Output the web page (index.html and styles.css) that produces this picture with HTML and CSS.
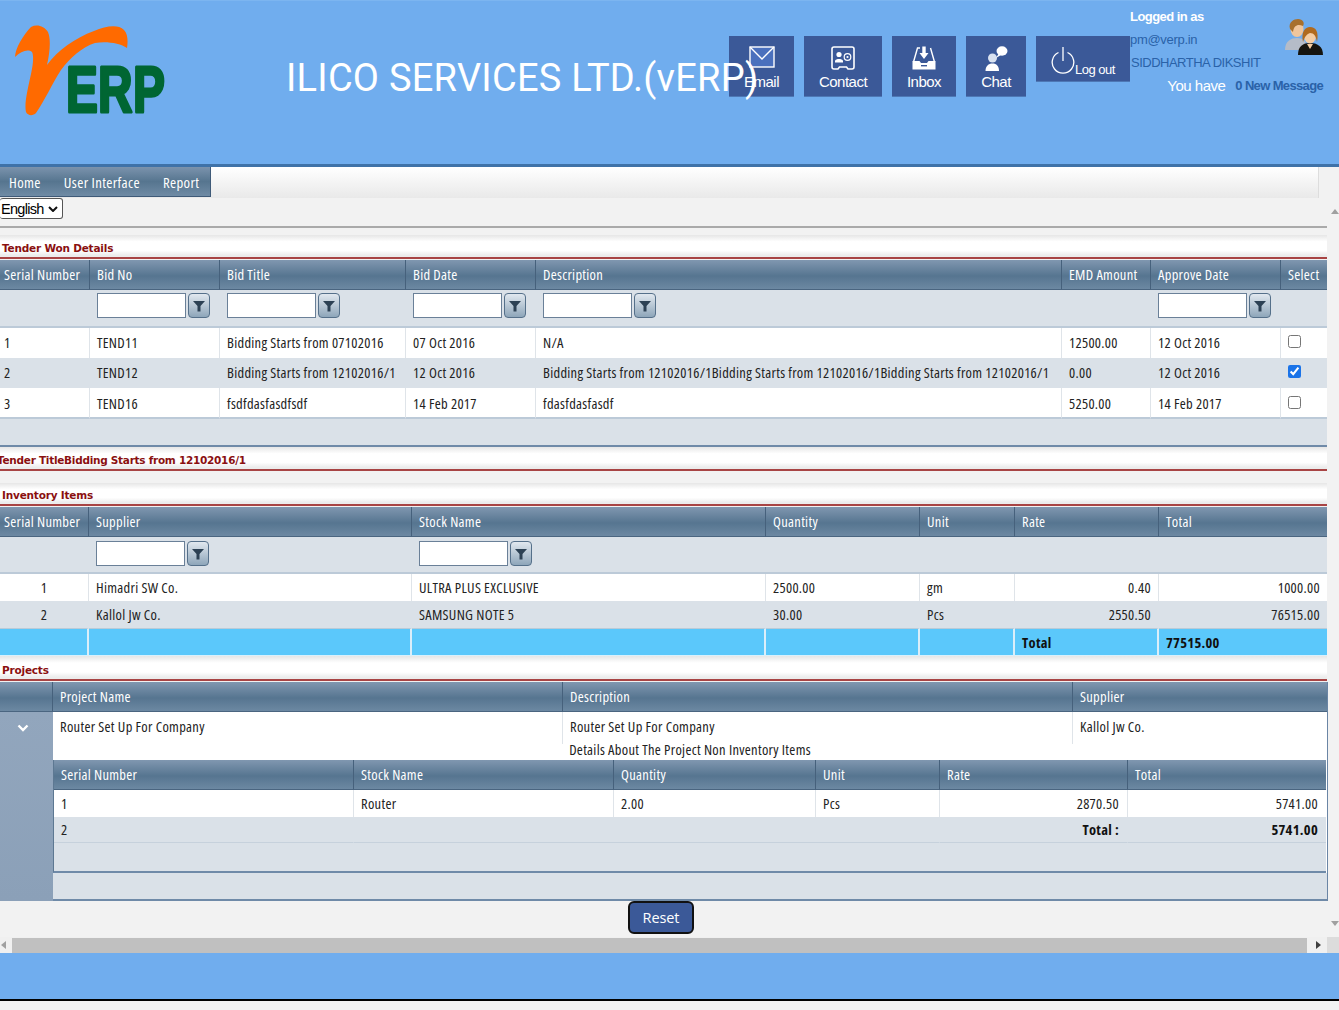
FILE: index.html
```html
<!DOCTYPE html>
<html lang="en">
<head>
<meta charset="utf-8">
<title>Tender Won Details</title>
<link rel="stylesheet" href="styles.css">
</head>
<body>
<header class="top">
  <div class="logo">
    <svg width="152" height="92" viewBox="15 25 152 92">
      <path fill="#ff6a00" d="M15 57C15 49 23 35 31 27C37 24 44 26 48 32C51 39 50 52 47 65C58 50 75 38 94 31C106 26 118 24 124 30C128 34 128 42 127 48C120 43 106 41 95 43C82 47 70 58 61 70C52 84 45 100 36 113C33 116 28 116 26 112C24 104 28 88 31 74C33 65 34 56 32 52C28 49 21 51 15 57Z"/>
      <text class="logo-erp" x="66" y="112" textLength="99" lengthAdjust="spacingAndGlyphs">ERP</text>
    </svg>
  </div>
  <h1 class="brand">ILICO SERVICES LTD.(vERP)</h1>
  <nav class="tiles">
    <a class="tile tile-email">
      <svg width="26" height="22" viewBox="0 0 26 22"><rect x="1" y="1" width="24" height="20" fill="#4a70bd" stroke="#fff" stroke-width="1.4"/><path d="M1 1L13 13L25 1" fill="none" stroke="#fff" stroke-width="1.4"/></svg>
      <span>Email</span>
    </a>
    <a class="tile tile-contact">
      <svg width="24" height="24" viewBox="0 0 24 24"><path d="M3 1H21A2 2 0 0 1 23 3V21A2 2 0 0 1 21 23H17L15.500 21H8.500L7 23H3A2 2 0 0 1 1 21V3A2 2 0 0 1 3 1Z" fill="none" stroke="#fff" stroke-width="1.6"/><circle cx="8" cy="8.500" r="2.600" fill="#fff"/><path d="M4 16.500H12V15C12 13.500 9.500 13 8 13C6.500 13 4 13.500 4 15Z" fill="#fff"/><circle cx="16.500" cy="11" r="3.300" fill="none" stroke="#fff" stroke-width="1.200"/><circle cx="16.500" cy="11" r="1.100" fill="#fff"/></svg>
      <span>Contact</span>
    </a>
    <a class="tile tile-inbox">
      <svg width="24" height="24" viewBox="0 0 24 24"><path d="M1.500 16L5.500 2H8M18.500 2L22.500 16" fill="none" stroke="#fff" stroke-width="1.400"/><path d="M10.300 0.500H13.700V7H16.500L12 13L7.500 7H10.300Z" fill="#fff"/><path d="M0.500 15H7.500L9 17H15L16.500 15H23.500V23.500H0.500Z" fill="#fff"/><rect x="9" y="19" width="6" height="1.400" fill="#3b5998"/></svg>
      <span>Inbox</span>
    </a>
    <a class="tile tile-chat">
      <svg width="24" height="25" viewBox="0 0 24 25"><circle cx="8.500" cy="12" r="4.500" fill="#d9e2f0"/><path d="M1.500 25C1.500 20 4.500 17.500 8.500 17.500C12.500 17.500 15 20 15 25Z" fill="#fff"/><ellipse cx="18" cy="5" rx="5.500" ry="4.700" fill="#fff"/><path d="M14.500 8L12 12L17 9Z" fill="#fff"/></svg>
      <span>Chat</span>
    </a>
    <a class="tile tile-logout">
      <svg width="24" height="28" viewBox="0 0 24 28"><path d="M7.500 6.500A10.800 10.800 0 1 0 16.500 6.500" fill="none" stroke="#fff" stroke-width="1.300"/><path d="M12 1V15" stroke="#fff" stroke-width="1.300"/></svg>
      <span>Log out</span>
    </a>
  </nav>
  <aside class="user">
    <div class="user-top">
      <div class="user-lines">
        <div class="u-logged">Logged in as</div>
        <div class="u-mail">pm@verp.in</div>
        <div class="u-name">SIDDHARTHA DIKSHIT</div>
      </div>
      <svg class="avatar" width="38" height="36" viewBox="0 0 38 36">
        <path d="M0 31C0 22 6 19 12 19C18 19 22 22 22 31Z" fill="#b5bcc8"/>
        <ellipse cx="12" cy="10" rx="6.500" ry="8" fill="#f0c69c"/>
        <path d="M5 10C3 3 9 0 13 0C18 0 20 4 18 7C13 5 9 6 8 13Z" fill="#a8702c"/>
        <path d="M13 36C13 27 18 24 25 24C32 24 38 27 38 36Z" fill="#15140f"/>
        <ellipse cx="25" cy="17" rx="6" ry="7.500" fill="#f4cda3"/>
        <path d="M18 23C16 13 20 8 25 8C31 8 34 13 32 23C31 17 29 14 25 14C22 15 20 17 18 23Z" fill="#b06a1e"/>
        <path d="M22 25L25 30L28 25Z" fill="#f4cda3"/>
      </svg>
    </div>
    <div class="u-msg"><span class="u-have">You have</span><span class="u-new">0 New Message</span></div>
  </aside>
</header>

<div class="navbar">
  <ul class="menu">
    <li>Home</li>
    <li>User Interface</li>
    <li>Report</li>
  </ul>
</div>

<div class="workspace">
  <main class="content">
    <div class="lang">
      <select class="lang-select"><option>English</option></select>
    </div>
    <div class="rule"></div>

    <h2 class="sec sec-first">Tender Won Details</h2>
    <table class="grid">
      <colgroup><col width="90"><col width="130"><col width="186"><col width="130"><col width="526"><col width="89"><col width="130"><col width="46"></colgroup>
      <thead>
        <tr class="head"><th>Serial Number</th><th class="pl">Bid No</th><th class="pl">Bid Title</th><th class="pl">Bid Date</th><th class="pl">Description</th><th class="pl">EMD Amount</th><th class="pl">Approve Date</th><th class="pl">Select</th></tr>
        <tr class="filter">
          <td></td>
          <td class="pl"><span class="fbox"><input type="text"><button class="fbtn" type="button"><svg width="12" height="12" viewBox="0 0 12 12"><path d="M0 1H12L7.500 6V11.500H4.500V6Z"/></svg></button></span></td>
          <td class="pl"><span class="fbox"><input type="text"><button class="fbtn" type="button"><svg width="12" height="12" viewBox="0 0 12 12"><path d="M0 1H12L7.500 6V11.500H4.500V6Z"/></svg></button></span></td>
          <td class="pl"><span class="fbox"><input type="text"><button class="fbtn" type="button"><svg width="12" height="12" viewBox="0 0 12 12"><path d="M0 1H12L7.500 6V11.500H4.500V6Z"/></svg></button></span></td>
          <td class="pl"><span class="fbox"><input type="text"><button class="fbtn" type="button"><svg width="12" height="12" viewBox="0 0 12 12"><path d="M0 1H12L7.500 6V11.500H4.500V6Z"/></svg></button></span></td>
          <td></td>
          <td class="pl"><span class="fbox"><input type="text"><button class="fbtn" type="button"><svg width="12" height="12" viewBox="0 0 12 12"><path d="M0 1H12L7.500 6V11.500H4.500V6Z"/></svg></button></span></td>
          <td></td>
        </tr>
      </thead>
      <tbody class="rows-t">
        <tr><td>1</td><td class="pl">TEND11</td><td class="pl">Bidding Starts from 07102016</td><td class="pl">07 Oct 2016</td><td class="pl">N/A</td><td class="pl">12500.00</td><td class="pl">12 Oct 2016</td><td class="pl"><input class="chk" type="checkbox"></td></tr>
        <tr class="alt"><td>2</td><td class="pl">TEND12</td><td class="pl">Bidding Starts from 12102016/1</td><td class="pl">12 Oct 2016</td><td class="pl">Bidding Starts from 12102016/1Bidding Starts from 12102016/1Bidding Starts from 12102016/1</td><td class="pl">0.00</td><td class="pl">12 Oct 2016</td><td class="pl"><input class="chk" type="checkbox" checked></td></tr>
        <tr><td>3</td><td class="pl">TEND16</td><td class="pl">fsdfdasfasdfsdf</td><td class="pl">14 Feb 2017</td><td class="pl">fdasfdasfasdf</td><td class="pl">5250.00</td><td class="pl">14 Feb 2017</td><td class="pl"><input class="chk" type="checkbox"></td></tr>
      </tbody>
      <tfoot><tr class="foot"><td colspan="8"></td></tr></tfoot>
    </table>

    <h2 class="sec sec-clip">Tender TitleBidding Starts from 12102016/1</h2>

    <h2 class="sec sec-inv">Inventory Items</h2>
    <table class="grid grid-inv">
      <colgroup><col width="89"><col width="323"><col width="354"><col width="154"><col width="95"><col width="144"><col width="168"></colgroup>
      <thead>
        <tr class="head"><th>Serial Number</th><th class="pl">Supplier</th><th class="pl">Stock Name</th><th class="pl">Quantity</th><th class="pl">Unit</th><th class="pl">Rate</th><th class="pl">Total</th></tr>
        <tr class="filter">
          <td></td>
          <td class="pl"><span class="fbox"><input type="text"><button class="fbtn" type="button"><svg width="12" height="12" viewBox="0 0 12 12"><path d="M0 1H12L7.500 6V11.500H4.500V6Z"/></svg></button></span></td>
          <td class="pl"><span class="fbox"><input type="text"><button class="fbtn" type="button"><svg width="12" height="12" viewBox="0 0 12 12"><path d="M0 1H12L7.500 6V11.500H4.500V6Z"/></svg></button></span></td>
          <td colspan="4"></td>
        </tr>
      </thead>
      <tbody class="rows-i">
        <tr><td class="ctr">1</td><td class="pl">Himadri SW Co.</td><td class="pl">ULTRA PLUS EXCLUSIVE</td><td class="pl">2500.00</td><td class="pl">gm</td><td class="num">0.40</td><td class="num">1000.00</td></tr>
        <tr class="alt"><td class="ctr">2</td><td class="pl">Kallol Jw Co.</td><td class="pl">SAMSUNG NOTE 5</td><td class="pl">30.00</td><td class="pl">Pcs</td><td class="num">2550.50</td><td class="num">76515.00</td></tr>
        <tr class="sum"><td></td><td></td><td></td><td></td><td></td><td class="pl">Total</td><td class="pl">77515.00</td></tr>
      </tbody>
    </table>

    <h2 class="sec sec-proj">Projects</h2>
    <table class="grid grid-proj">
      <colgroup><col width="53"><col width="510"><col width="510"><col width="254"></colgroup>
      <thead>
        <tr class="head"><th></th><th class="pl">Project Name</th><th class="pl">Description</th><th class="pl">Supplier</th></tr>
      </thead>
      <tbody>
        <tr class="proj">
          <td class="expander" rowspan="3"><svg width="12" height="8" viewBox="0 0 12 8"><path d="M1.500 1.500L6 6L10.500 1.500" fill="none" stroke="#fff" stroke-width="2.400"/></svg></td>
          <td class="pl">Router Set Up For Company</td><td class="pl">Router Set Up For Company</td><td class="pl">Kallol Jw Co.</td>
        </tr>
        <tr>
          <td class="nested" colspan="3">
            <div class="nested-title">Details About The Project Non Inventory Items</div>
            <table class="grid grid-inner">
              <colgroup><col width="300"><col width="260"><col width="202"><col width="124"><col width="188"><col width="198"></colgroup>
              <thead><tr class="head"><th class="pl">Serial Number</th><th class="pl">Stock Name</th><th class="pl">Quantity</th><th class="pl">Unit</th><th class="pl">Rate</th><th class="pl">Total</th></tr></thead>
              <tbody class="rows-n">
                <tr><td class="pl">1</td><td class="pl">Router</td><td class="pl">2.00</td><td class="pl">Pcs</td><td class="num">2870.50</td><td class="num">5741.00</td></tr>
                <tr class="alt"><td class="pl">2</td><td colspan="3"></td><td class="num strong">Total :</td><td class="num strong">5741.00</td></tr>
              </tbody>
              <tfoot><tr class="foot-n"><td colspan="6"></td></tr></tfoot>
            </table>
          </td>
        </tr>
        <tr class="foot-p"><td colspan="3"></td></tr>
      </tbody>
    </table>

    <div class="actions"><button class="reset" type="button">Reset</button></div>
  </main>
  <div class="vscroll"><span class="tri-up"></span><span class="tri-down"></span></div>
</div>

<div class="hscroll">
  <span class="tri-left"></span>
  <div class="thumb"></div>
  <span class="tri-right"></span>
  <div class="corner"></div>
</div>

<footer class="bottom"></footer>
</body>
</html>
```

FILE: styles.css
```css
* { box-sizing: border-box; }
html, body { margin: 0; padding: 0; }
body {
  width: 1339px;
  height: 1010px;
  overflow: hidden;
  background: #f2f2f2;
  font-family: "Open Sans", "Noto Sans", sans-serif;
  font-stretch: 75%;
  font-size: 14.500px;
  letter-spacing: 0.300px;
  color: #222;
}

/* header */
.top {
  height: 167px;
  background: #70adee;
  border-top: 1px solid #7cb5f0;
  border-bottom: 3px solid #3f72a8;
  display: flex;
  align-items: flex-start;
}
.logo { width: 287px; flex: none; padding: 24px 0 0 15px; }
.logo svg { display: block; }
.logo-erp {
  font-family: "Liberation Sans", Arial, sans-serif;
  font-weight: 700;
  font-size: 64px;
  fill: #006633;
  stroke: #006633;
  stroke-width: 3px;
  stroke-linejoin: round;
}
.brand {
  width: 442px;
  flex: none;
  margin: 54px 0 0;
  position: relative;
  z-index: 2;
  font-family: Roboto, sans-serif;
  font-stretch: normal;
  font-weight: 400;
  font-size: 38px;
  line-height: 46px;
  letter-spacing: 0.250px;
  color: #fff;
  white-space: nowrap;
  text-indent: -1px;
}
.tiles { display: flex; flex: none; gap: 10px; margin-top: 35px; width: 401px; align-items: flex-start; }
.tile {
  background: #3b5998;
  border-bottom: 1px solid #4e78b5;
  height: 61px;
  display: flex;
  flex-direction: column;
  align-items: center;
  justify-content: space-between;
  padding: 10px 0 5px;
  color: #fff;
  font-family: "Liberation Sans", Arial, sans-serif;
  font-stretch: normal;
  font-size: 15px;
  letter-spacing: -0.500px;
  line-height: 18px;
}
.tile-email { width: 65px; }
.tile-contact { width: 78px; }
.tile-inbox { width: 64px; }
.tile-chat { width: 60px; }
.tile-logout {
  width: 94px;
  height: 46px;
  flex-direction: row;
  justify-content: flex-start;
  align-items: flex-start;
  padding: 10px 0 0 15px;
  font-size: 13px;
  letter-spacing: -0.500px;
}
.tile-logout span { margin-top: 15px; }
.tile-logout svg { display: block; }

.user { flex: 1; padding: 8px 16px 0 0; display: flex; flex-direction: column; font-family: "Liberation Sans", Arial, sans-serif; font-stretch: normal; }
.user-top { display: flex; justify-content: space-between; align-items: flex-start; }
.user-lines { display: flex; flex-direction: column; gap: 7px; font-size: 13px; line-height: 16px; letter-spacing: -0.300px; color: #2a62a8; }
.u-logged { color: #fff; font-weight: 700; letter-spacing: -0.550px; }
.u-name { padding-left: 1px; letter-spacing: -0.500px; }
.avatar { margin-top: 10px; display: block; }
.u-msg { display: flex; justify-content: flex-end; align-items: center; gap: 10px; margin-top: 6px; }
.u-have { color: #fff; font-size: 15px; letter-spacing: -0.500px; }
.u-new { color: #2a62a8; font-weight: 700; font-size: 13px; letter-spacing: -0.650px; }

/* menu bar */
.navbar {
  width: 1319px;
  height: 31px;
  background: linear-gradient(#fff, #e9e9e9);
  border-right: 1px solid #ddd;
}
.menu {
  margin: 0;
  padding: 0 0 0 9px;
  list-style: none;
  width: 211px;
  height: 30px;
  display: flex;
  align-items: center;
  gap: 23px;
  white-space: nowrap;
  background: linear-gradient(#7b93ad, #56758f 50%, #6f8ba5);
  border-right: 1px solid #3f5a78;
  border-bottom: 1px solid #3f5a78;
  color: #fff;
  font-size: 14.800px;
  letter-spacing: 0.350px;
}

/* work area */
.workspace { display: flex; height: 739px; }
.content { width: 1327px; flex: none; }
.lang { height: 28px; padding-top: 0; }
.lang-select {
  display: block;
  width: 63px;
  height: 21px;
  padding: 0 0 0 1px;
  appearance: none;
  background: #fff url("data:image/svg+xml,%3Csvg xmlns='http://www.w3.org/2000/svg' width='10' height='6'%3E%3Cpath d='M1 1L5 5L9 1' fill='none' stroke='%23111' stroke-width='2'/%3E%3C/svg%3E") no-repeat 48px 7px;
  border: 1px solid #555;
  border-left: 0;
  border-radius: 3px;
  font-family: "Liberation Sans", Arial, sans-serif;
  font-stretch: normal;
  font-size: 14.500px;
  letter-spacing: -0.700px;
  color: #000;
}
.rule { height: 2px; background: #aaa; margin-bottom: 7px; }

.sec {
  margin: 0;
  height: 24px;
  padding: 5px 0 0 2px;
  background: linear-gradient(#e6e6e6, #fff 30%, #fff 70%, #ececec 92%);
  border-bottom: 2px solid #a84444;
  font-family: "DejaVu Sans", sans-serif;
  font-stretch: normal;
  font-size: 10.500px;
  line-height: 17px;
  font-weight: 700;
  color: #8a1010;
  letter-spacing: -0.200px;
}
.sec-clip { margin-bottom: 12px; overflow: hidden; padding-left: 0; text-indent: -3px; letter-spacing: -0.270px; }
.sec-inv { height: 23px; padding-top: 4px; }
.sec-proj { height: 25px; padding-top: 6px; }

/* grids */
.grid { width: 1327px; table-layout: fixed; border-collapse: separate; border-spacing: 0; margin-top: 1px; }
.head th {
  height: 30px;
  padding: 0 0 0 4px;
  text-align: left;
  font-weight: 400;
  color: #fff;
  white-space: nowrap;
  background: linear-gradient(#8097b0, #567590 55%, #6c88a2);
  border-right: 1px solid #46617c;
  border-bottom: 1px solid #4a6580;
}
.head th:last-child { border-right: 0; }
.head th.pl, td.pl { padding-left: 7px; }
td { padding: 0 0 0 4px; white-space: nowrap; }
.filter td { height: 38px; background: #dae1e8; border-bottom: 2px solid #bccad8; vertical-align: top; padding-top: 3px; }
.grid-inv .filter td { height: 37px; padding-top: 4px; }
.fbox { display: flex; gap: 2px; height: 25px; }
.fbox input { width: 89px; height: 25px; border: 1px solid #6a8098; background: #fff; padding: 0; margin: 0; }
.fbtn {
  width: 22px;
  height: 25px;
  margin: 0;
  padding: 0;
  display: flex;
  align-items: center;
  justify-content: center;
  background: linear-gradient(#e1e8ef, #8ea6ba);
  border: 1px solid #55708a;
  border-radius: 4px;
}
.fbtn svg { fill: #2c4154; }

tbody td { background: #fff; border-right: 1px solid #dfe4e9; }
tbody td:last-child { border-right: 0; }
tbody .alt td { background: #dae1e8; border-right-color: #dae1e8; }
.rows-t td { height: 30px; padding-bottom: 2px; }
.rows-t tr:last-child td { border-bottom: 2px solid #bccad8; height: 31px; padding-top: 2px; padding-bottom: 0; }
.foot td { height: 28px; background: #dae1e8; border-bottom: 2px solid #6f8aa8; }
.chk { display: block; width: 13px; height: 13px; margin: -1px 0 0; accent-color: #1a73e8; }
.rows-t tr:last-child .chk { margin-top: -3px; }

.ctr { text-align: center; padding-left: 0; }
.num { text-align: right; padding: 0 7px 0 0; }
.rows-i td { height: 27px; }
.rows-i .sum td {
  height: 28px;
  padding-top: 1px;
  background: #5bc8fb;
  border-right: 2px solid #dbeef9;
  border-top: 1px solid #b9cbd8;
  border-bottom: 1px solid #d9f1fc;
  font-weight: 700;
  color: #111;
}
.rows-i .sum td:last-child { border-right: 0; }

.grid-proj { border-right: 1px solid #6a85a5; }
.proj td { height: 32px; vertical-align: top; padding-top: 5px; }
.proj td.expander {
  background: linear-gradient(#92a6bd, #8ba0b8);
  padding: 5px 0 0 17px;
  vertical-align: top;
  border-right: 0;
  border-bottom: 1px solid #8ba0b8;
}
.proj td:nth-child(4) { border-right: 0; }
.nested { padding: 0; border-right: 0; background: #fff; }
.nested-title { height: 16px; text-align: center; line-height: 12px; }
.grid-inner { width: 1273px; margin: 0; border-left: 1px solid #5d7892; border-bottom: 2px solid #6f8aa8; }
.rows-n td { height: 26px; border-bottom: 1px solid #c6d1dc; }
.rows-n tr:first-child td { height: 27px; border-bottom: 0; padding-bottom: 1px; }
.rows-n td.num { padding-right: 8px; }
.strong { font-weight: 700; color: #111; }
.foot-n td { height: 28px; background: #dae1e8; }
.foot-p td { height: 28px; background: #dae1e8; border-bottom: 2px solid #6f8aa8; }

.actions { display: flex; justify-content: center; padding: 0 5px 0 0; }
.reset {
  width: 66px;
  height: 33px;
  background: #3b5998;
  color: #fff;
  border: 2px solid #111;
  border-radius: 6px;
  font-family: "Open Sans", "Noto Sans", sans-serif;
  font-stretch: normal;
  font-size: 14.500px;
  letter-spacing: -0.100px;
}

/* scrollbars */
.vscroll { flex: 1; display: flex; flex-direction: column; justify-content: space-between; padding: 11px 0 11px 4px; }
.tri-up { width: 0; height: 0; border: 4px solid transparent; border-top: 0; border-bottom: 5px solid #a0a0a0; }
.tri-down { width: 0; height: 0; border: 4px solid transparent; border-bottom: 0; border-top: 5px solid #a0a0a0; }
.hscroll { height: 16px; display: flex; align-items: center; background: #f0f0f0; }
.tri-left { width: 0; height: 0; margin: 0 6px 0 1px; border: 4px solid transparent; border-left: 0; border-right: 5px solid #a0a0a0; }
.thumb { width: 1296px; height: 15px; background: #c0c0c0; }
.tri-right { width: 0; height: 0; margin: 0 6px 0 9px; border: 4px solid transparent; border-right: 0; border-left: 5px solid #404040; }
.corner { width: 12px; height: 16px; background: #dcdcdc; }
.bottom { height: 48px; background: #70adee; border-bottom: 2px solid #000; }
```
